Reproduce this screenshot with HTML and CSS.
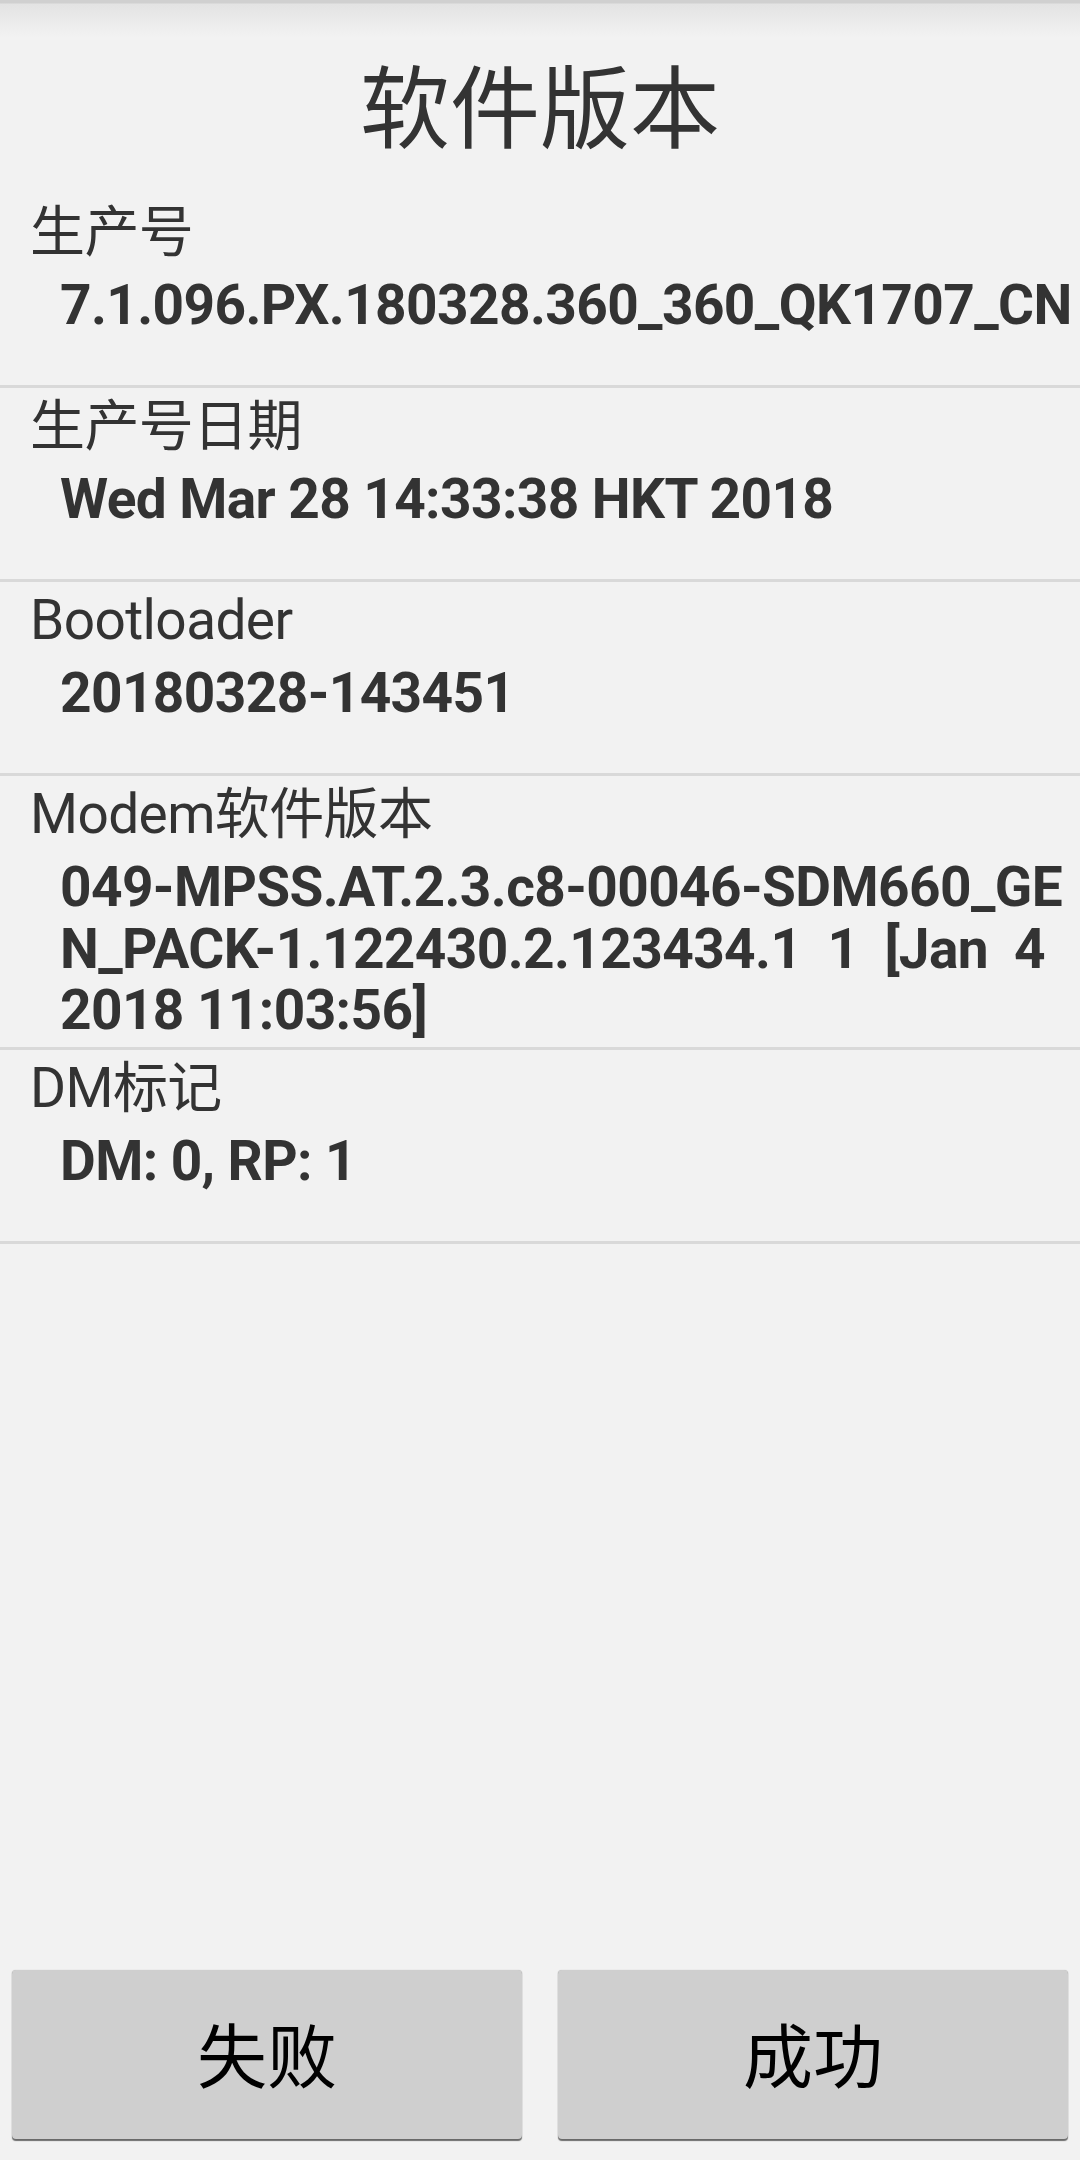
FILE: index.html
```html
<!DOCTYPE html>
<html lang="zh-CN">
<head>
<meta charset="utf-8">
<title>软件版本</title>
<link rel="stylesheet" href="styles.css">
</head>
<body>
<main class="page">
  <header class="title-bar">
    <h1 class="title">软件版本</h1>
  </header>
  <section class="item">
    <div class="label">生产号</div>
    <div class="value">7.1.096.PX.180328.360_360_QK1707_CN</div>
  </section>
  <section class="item">
    <div class="label">生产号日期</div>
    <div class="value">Wed Mar 28 14:33:38 HKT 2018</div>
  </section>
  <section class="item">
    <div class="label">Bootloader</div>
    <div class="value">20180328-143451</div>
  </section>
  <section class="item">
    <div class="label">Modem软件版本</div>
    <div class="value">049-MPSS.AT.2.3.c8-00046-SDM660_GE<br>N_PACK-1.122430.2.123434.1  1  [Jan  4<br>2018 11:03:56]</div>
  </section>
  <section class="item">
    <div class="label">DM标记</div>
    <div class="value">DM: 0, RP: 1</div>
  </section>
  <div class="spacer"></div>
  <footer class="actions">
    <button class="btn" type="button">失败</button>
    <button class="btn" type="button">成功</button>
  </footer>
</main>
</body>
</html>
```

FILE: styles.css
```css
html, body {
  margin: 0;
  padding: 0;
  background: #f2f2f2;
}

.page {
  display: flex;
  flex-direction: column;
  height: 2160px;
  width: 1080px;
  overflow: hidden;
  font-family: "Roboto", "Noto Sans CJK SC", sans-serif;
  color: #333333;
}

.title-bar {
  box-sizing: border-box;
  height: 194px;
  padding-top: 52px;
  background: linear-gradient(to bottom, #d0d0d0 0px, #d0d0d0 3px, #e3e3e3 4px, #f2f2f2 37px, #f2f2f2 100%);
}

.title {
  margin: 0;
  font-family: "Noto Sans CJK SC", sans-serif;
  font-weight: 400;
  font-size: 90px;
  line-height: 100px;
  text-align: center;
  color: #333333;
}

.item {
  box-sizing: border-box;
  min-height: 194px;
  padding: 6px 0 5px 30px;
  border-bottom: 3px solid #d9d9d9;
}

.label {
  font-size: 55px;
  line-height: 64px;
  font-weight: 400;
  letter-spacing: -0.6px;
}

.value {
  margin-top: 11px;
  padding-left: 30px;
  font-size: 55px;
  line-height: 61.5px;
  font-weight: 700;
  letter-spacing: -0.6px;
  white-space: pre;
}

.spacer {
  flex: 1;
}

.actions {
  display: flex;
  gap: 36px;
  padding: 0 12px 21px 12px;
}

.btn {
  flex: 1;
  height: 169px;
  padding: 0 0 4px 0;
  border: none;
  border-radius: 4px;
  background: #cfcfcf;
  box-shadow: 0 1.5px 1px rgba(0, 0, 0, 0.55), 0 0 1px rgba(0, 0, 0, 0.25);
  font-family: "Noto Sans CJK SC", sans-serif;
  font-size: 70px;
  font-weight: 400;
  color: #000000;
  display: flex;
  align-items: center;
  justify-content: center;
}
```
